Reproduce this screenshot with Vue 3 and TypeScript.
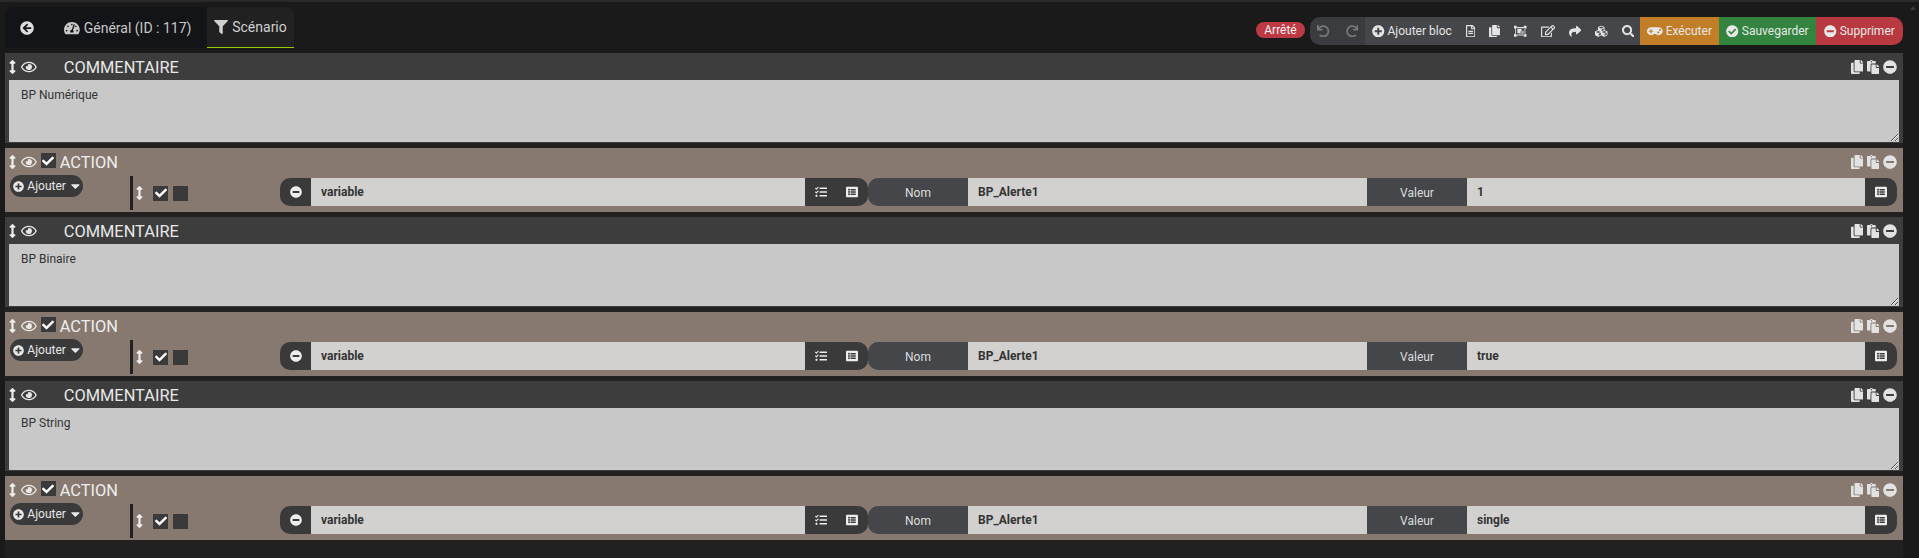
<template>
  <div class="page">
    <header class="topbar">
      <nav class="tabs">
        <a class="tab tab-back"><Icon name="back" /></a>
        <a class="tab tab-general"><Icon name="gauge" /> Général (ID : 117)</a>
        <a class="tab tab-active"><Icon name="filter" /> Scénario</a>
      </nav>
      <div class="actions">
        <span class="state">Arrêté</span>
        <div class="toolbar">
          <div class="history">
            <button class="tool muted"><Icon name="undo" /></button>
            <button class="tool muted"><Icon name="redo" /></button>
          </div>
          <div class="tools">
            <button class="tool add"><Icon name="plus" /> Ajouter bloc</button>
            <button v-for="t in tools" :key="t" class="tool"><Icon :name="t" /></button>
          </div>
          <button class="cmd run"><Icon name="gamepad" /> Exécuter</button>
          <button class="cmd save"><Icon name="checkCircle" /> Sauvegarder</button>
          <button class="cmd del"><Icon name="minus" /> Supprimer</button>
        </div>
      </div>
    </header>

    <main class="blocks">
      <template v-for="(b, i) in blocks" :key="i">
        <!-- bloc commentaire -->
        <section v-if="b.type === 'comment'" class="block comment">
          <div class="block-head">
            <Icon name="arrows" class="drag" />
            <Icon name="eye" class="eye" />
            <span class="comment-title">COMMENTAIRE</span>
            <span class="head-icons">
              <Icon name="copy" /><Icon name="paste" /><Icon name="minus" />
            </span>
          </div>
          <textarea class="comment-text" :value="b.text" spellcheck="false"></textarea>
        </section>

        <!-- bloc action -->
        <section v-else class="block action">
          <div class="block-head">
            <Icon name="arrows" class="drag" />
            <Icon name="eye" class="eye" />
            <span class="check on head-check"><Icon name="check" /></span>
            <span class="action-title">ACTION</span>
            <span class="head-icons">
              <Icon name="copy" /><Icon name="paste" /><Icon name="minus" />
            </span>
          </div>
          <div class="action-body">
            <div class="add-col">
              <button class="add-btn"><Icon name="plus" class="add-plus" /> Ajouter <Icon name="caret" class="caret" /></button>
            </div>
            <div class="sub">
              <div class="sub-left">
                <Icon name="arrows" class="drag" />
                <span class="check on"><Icon name="check" /></span>
                <span class="check"></span>
              </div>
              <div class="pill">
                <span class="seg seg-start"><Icon name="minus" /></span>
                <input class="field" value="variable" readonly />
                <span class="seg seg-double"><Icon name="tasks" /><Icon name="list" /></span>
                <span class="label label-start">Nom</span>
                <input class="field" :value="b.name" readonly />
                <span class="label">Valeur</span>
                <input class="field" :value="b.value" readonly />
                <span class="seg seg-end"><Icon name="list" /></span>
              </div>
            </div>
          </div>
        </section>
      </template>
    </main>
    <span class="scroll-arrow"></span>
  </div>
</template>

<script setup lang="ts">
import { h } from 'vue'

type Block =
  | { type: 'comment'; text: string }
  | { type: 'action'; name: string; value: string }

const blocks: Block[] = [
  { type: 'comment', text: 'BP Numérique' },
  { type: 'action', name: 'BP_Alerte1', value: '1' },
  { type: 'comment', text: 'BP Binaire' },
  { type: 'action', name: 'BP_Alerte1', value: 'true' },
  { type: 'comment', text: 'BP String' },
  { type: 'action', name: 'BP_Alerte1', value: 'single' }
]

const tools = ['file', 'copy', 'group', 'edit', 'share', 'cubes', 'search']

const ICONS: Record<string, [number, string]> = {
  back: [512, 'M256 504C119 504 8 393 8 256S119 8 256 8s248 111 248 248-111 248-248 248zm28.9-143.6L209.4 288H392c13.3 0 24-10.7 24-24v-16c0-13.3-10.7-24-24-24H209.4l75.5-72.4c9.7-9.3 9.9-24.8.4-34.3l-11-10.9c-9.4-9.4-24.6-9.4-33.9 0L107.7 239c-9.4 9.4-9.4 24.6 0 33.9l132.7 132.7c9.4 9.4 24.6 9.4 33.9 0l11-10.9c9.5-9.5 9.3-25-.4-34.3z'],
  gauge: [576, 'M288 32C128.94 32 0 160.94 0 320c0 52.8 14.25 102.26 39.06 144.8 5.61 9.62 16.3 15.2 27.44 15.2h443c11.14 0 21.83-5.58 27.44-15.2C561.75 422.26 576 372.8 576 320c0-159.06-128.94-288-288-288zm0 64c14.71 0 26.58 10.13 30.32 23.65-1.11 2.26-2.64 4.23-3.45 6.67l-9.22 27.67c-5.13 3.49-10.97 6.01-17.64 6.01-17.67 0-32-14.33-32-32S270.33 96 288 96zM96 384c-17.67 0-32-14.33-32-32s14.33-32 32-32 32 14.33 32 32-14.33 32-32 32zm48-160c-17.67 0-32-14.33-32-32s14.33-32 32-32 32 14.33 32 32-14.33 32-32 32zm246.77-72.41l-61.33 184C343.13 347.33 352 364.54 352 384c0 11.72-3.38 22.55-8.88 32H232.88c-5.5-9.45-8.88-20.28-8.88-32 0-33.94 26.5-61.43 59.9-63.59l61.34-184.01c4.17-12.56 17.73-19.45 30.36-15.17 12.57 4.19 19.35 17.79 15.17 30.36zm14.66 57.2l15.52-46.55c3.47-1.29 7.13-2.23 11.05-2.23 17.67 0 32 14.33 32 32s-14.33 32-32 32c-11.38-.01-20.89-6.28-26.57-15.22zM480 384c-17.67 0-32-14.33-32-32s14.33-32 32-32 32 14.33 32 32-14.33 32-32 32z'],
  filter: [512, 'M487.976 0H24.028C2.71 0-8.047 25.866 7.058 40.971L192 225.941V432c0 7.831 3.821 15.17 10.237 19.662l80 55.98C298.02 518.69 320 507.493 320 487.98V225.941l184.947-184.97C520.021 25.896 509.338 0 487.976 0z'],
  undo: [512, 'M212.333 224.333H12c-6.627 0-12-5.373-12-12V12C0 5.373 5.373 0 12 0h48c6.627 0 12 5.373 12 12v78.112C117.773 39.279 184.26 7.47 258.175 8.007c136.906.994 246.448 111.623 246.157 248.532C504.041 393.258 393.12 504 256.333 504c-64.089 0-122.496-24.313-166.51-64.215-5.099-4.622-5.334-12.554-.467-17.42l33.967-33.967c4.474-4.474 11.662-4.717 16.401-.525C170.76 415.336 211.58 432 256.333 432c97.268 0 176-78.716 176-176 0-97.267-78.716-176-176-176-58.496 0-110.28 28.476-142.274 72.333h98.274c6.627 0 12 5.373 12 12v48c0 6.627-5.373 12-12 12z'],
  redo: [512, 'M500.33 0h-47.41a12 12 0 0 0-12 12.57l4 82.76A247.42 247.42 0 0 0 256 8C119.34 8 7.9 119.53 8 256.19 8.1 393.07 119.1 504 256 504a247.1 247.1 0 0 0 166.18-63.91 12 12 0 0 0 .48-17.43l-34-34a12 12 0 0 0-16.38-.55A176 176 0 1 1 402.1 157.8l-101.53-4.87a12 12 0 0 0-12.57 12v47.41a12 12 0 0 0 12 12h200.33a12 12 0 0 0 12-12V12a12 12 0 0 0-12-12z'],
  plus: [512, 'M256 8C119 8 8 119 8 256s111 248 248 248 248-111 248-248S393 8 256 8zm144 276c0 6.6-5.4 12-12 12h-92v92c0 6.6-5.4 12-12 12h-56c-6.6 0-12-5.4-12-12v-92h-92c-6.6 0-12-5.4-12-12v-56c0-6.6 5.4-12 12-12h92v-92c0-6.6 5.4-12 12-12h56c6.6 0 12 5.4 12 12v92h92c6.6 0 12 5.4 12 12v56z'],
  minus: [512, 'M256 8C119 8 8 119 8 256s111 248 248 248 248-111 248-248S393 8 256 8zM124 296c-6.6 0-12-5.4-12-12v-56c0-6.6 5.4-12 12-12h264c6.6 0 12 5.4 12 12v56c0 6.6-5.4 12-12 12H124z'],
  checkCircle: [512, 'M504 256c0 136.967-111.033 248-248 248S8 392.967 8 256 119.033 8 256 8s248 111.033 248 248zM227.314 387.314l184-184c6.248-6.248 6.248-16.379 0-22.627l-22.627-22.627c-6.248-6.249-16.379-6.249-22.628 0L216 308.118l-70.059-70.059c-6.248-6.248-16.379-6.248-22.628 0l-22.627 22.627c-6.248 6.248-6.248 16.379 0 22.627l104 104c6.249 6.249 16.379 6.249 22.628.001z'],
  search: [512, 'M505 442.7L405.3 343c-4.5-4.5-10.6-7-17-7H372c27.6-35.3 44-79.7 44-128C416 93.1 322.9 0 208 0S0 93.1 0 208s93.1 208 208 208c48.3 0 92.7-16.4 128-44v16.3c0 6.4 2.5 12.5 7 17l99.7 99.7c9.4 9.4 24.6 9.4 33.9 0l28.3-28.3c9.4-9.4 9.4-24.6.1-34zM208 336c-70.7 0-128-57.2-128-128 0-70.7 57.2-128 128-128 70.7 0 128 57.2 128 128 0 70.7-57.2 128-128 128z'],
  share: [512, 'M503.691 189.836L327.687 37.851C312.281 24.546 288 35.347 288 56.015v80.053C127.371 137.907 0 170.1 0 322.326c0 61.441 39.581 122.309 83.333 154.132 13.653 9.931 33.111-2.533 28.077-18.631C66.066 312.814 132.917 274.316 288 272.085V360c0 20.7 24.3 31.453 39.687 18.164l176.004-152c11.071-9.562 11.086-26.753 0-36.328z'],
  copy: [448, 'M320 448v40c0 13.255-10.745 24-24 24H24c-13.255 0-24-10.745-24-24V120c0-13.255 10.745-24 24-24h72v296c0 30.879 25.121 56 56 56h168zm0-344V0H152c-13.255 0-24 10.745-24 24v368c0 13.255 10.745 24 24 24h272c13.255 0 24-10.745 24-24V128H344c-13.2 0-24-10.8-24-24zm120.971-31.029L375.029 7.029A24 24 0 0 0 358.059 0H352v96h96v-6.059a24 24 0 0 0-7.029-16.97z'],
  paste: [448, 'M128 184c0-30.879 25.122-56 56-56h136V56c0-13.255-10.745-24-24-24h-80.61C204.306 12.89 183.637 0 160 0s-44.306 12.89-55.39 32H24C10.745 32 0 42.745 0 56v336c0 13.255 10.745 24 24 24h104V184zm32-144c13.255 0 24 10.745 24 24s-10.745 24-24 24-24-10.745-24-24 10.745-24 24-24zm184 248h104v200c0 13.255-10.745 24-24 24H184c-13.255 0-24-10.745-24-24V184c0-13.255 10.745-24 24-24h136v104c0 13.2 10.8 24 24 24zm104-38.059V256h-96v-96h6.059a24 24 0 0 1 16.97 7.029l65.941 65.941a24.002 24.002 0 0 1 7.03 16.971z'],
  file: [384, 'M288 248v28c0 6.6-5.4 12-12 12H108c-6.6 0-12-5.4-12-12v-28c0-6.6 5.4-12 12-12h168c6.6 0 12 5.4 12 12zm-12 72H108c-6.6 0-12 5.4-12 12v28c0 6.6 5.4 12 12 12h168c6.6 0 12-5.4 12-12v-28c0-6.6-5.4-12-12-12zm108-188.1V464c0 26.5-21.5 48-48 48H48c-26.5 0-48-21.5-48-48V48C0 21.5 21.5 0 48 0h204.1C264.8 0 277 5.1 286 14.1L369.9 98c9 8.9 14.1 21.2 14.1 33.9zm-128-80V128h76.1L256 51.9zM336 464V176H232c-13.3 0-24-10.7-24-24V48H48v416h288z'],
  edit: [576, 'M402.3 344.9l32-32c5-5 13.7-1.5 13.7 5.7V464c0 26.5-21.5 48-48 48H48c-26.5 0-48-21.5-48-48V112c0-26.5 21.5-48 48-48h273.5c7.1 0 10.7 8.6 5.7 13.7l-32 32c-1.5 1.5-3.5 2.3-5.7 2.3H48v352h352V350.5c0-2.1.8-4.1 2.3-5.6zm156.6-201.8L296.3 405.7l-90.4 10c-26.2 2.9-48.5-19.2-45.6-45.6l10-90.4L432.9 17.1c22.9-22.9 59.9-22.9 82.7 0l43.2 43.2c22.9 22.9 22.9 60 .1 82.8zM460.1 174L402 115.9 216.2 301.8l-7.3 65.3 65.3-7.3L460.1 174zm64.8-79.7l-43.2-43.2c-4.1-4.1-10.8-4.1-14.8 0L436 82l58.1 58.1 30.9-30.9c4-4.2 4-10.8-.1-14.9z'],
  group: [512, 'M0 32h112v48h288V32h112v112h-48v224h48v112H400v-48H112v48H0V368h48V144H0V32zm112 96v-16H80v288h32v-16h288v16h32V112h-32v16H112zm24 32h176v112h-64v64H136V160zm208 80h48v104H224v-32h120v-72z']
  ,
  cubes: [512, 'M488.6 250.2L392 214V105.5c0-15-9.3-28.4-23.4-33.7l-100-37.5c-8.1-3.1-17.1-3.1-25.3 0l-100 37.5c-14.1 5.3-23.4 18.7-23.4 33.7V214l-96.6 36.2C9.3 255.5 0 268.9 0 283.9V394c0 13.6 7.7 26.1 19.9 32.2l100 50c10.1 5.1 22.1 5.1 32.2 0l103.9-52 103.9 52c10.1 5.1 22.1 5.1 32.2 0l100-50c12.2-6.1 19.9-18.6 19.9-32.2V283.9c0-15-9.3-28.4-23.4-33.7zM358 214.8l-85 31.9v-68.2l85-37v73.3zM154 104.1l102-38.2 102 38.2v.6l-102 41.4-102-41.4v-.6zm84 291.1l-85 42.5v-79.1l85-38.8v75.4zm0-112l-102 41.4-102-41.4v-.6l102-38.2 102 38.2v.6zm240 112l-85 42.5v-79.1l85-38.8v75.4zm0-112l-102 41.4-102-41.4v-.6l102-38.2 102 38.2v.6z'],
  gamepad: [640, 'M480.07 96H160a160 160 0 1 0 114.24 272h91.52A160 160 0 1 0 480.07 96zM248 268a12 12 0 0 1-12 12h-52v52a12 12 0 0 1-12 12h-24a12 12 0 0 1-12-12v-52H84a12 12 0 0 1-12-12v-24a12 12 0 0 1 12-12h52v-52a12 12 0 0 1 12-12h24a12 12 0 0 1 12 12v52h52a12 12 0 0 1 12 12zm216 76a40 40 0 1 1 40-40 40 40 0 0 1-40 40zm64-96a40 40 0 1 1 40-40 40 40 0 0 1-40 40z'],
  list: [512, 'M464 480H48c-26.51 0-48-21.49-48-48V80c0-26.51 21.49-48 48-48h416c26.51 0 48 21.49 48 48v352c0 26.51-21.49 48-48 48zM128 120c-22.091 0-40 17.909-40 40s17.909 40 40 40 40-17.909 40-40-17.909-40-40-40zm0 96c-22.091 0-40 17.909-40 40s17.909 40 40 40 40-17.909 40-40-17.909-40-40-40zm0 96c-22.091 0-40 17.909-40 40s17.909 40 40 40 40-17.909 40-40-17.909-40-40-40zm288-136v-32c0-6.627-5.373-12-12-12H204c-6.627 0-12 5.373-12 12v32c0 6.627 5.373 12 12 12h200c6.627 0 12-5.373 12-12zm0 96v-32c0-6.627-5.373-12-12-12H204c-6.627 0-12 5.373-12 12v32c0 6.627 5.373 12 12 12h200c6.627 0 12-5.373 12-12zm0 96v-32c0-6.627-5.373-12-12-12H204c-6.627 0-12 5.373-12 12v32c0 6.627 5.373 12 12 12h200c6.627 0 12-5.373 12-12z'],
  tasks: [512, 'M139.61 35.5a12 12 0 0 0-17 0L58.93 98.81l-22.7-22.12a12 12 0 0 0-17 0L3.53 92.41a12 12 0 0 0 0 17l47.59 47.4a12.78 12.78 0 0 0 17.61 0l15.59-15.62L156.52 69a12.09 12.09 0 0 0 .09-17zm0 159.19a12 12 0 0 0-17 0l-63.68 63.72-22.7-22.1a12 12 0 0 0-17 0L3.53 252a12 12 0 0 0 0 17L51 316.5a12.77 12.77 0 0 0 17.6 0l15.7-15.69 72.2-72.22a12 12 0 0 0 .09-16.9zM64 368c-26.49 0-48.59 21.5-48.59 48S37.53 464 64 464a48 48 0 0 0 0-96zm432 16H208a16 16 0 0 0-16 16v32a16 16 0 0 0 16 16h288a16 16 0 0 0 16-16v-32a16 16 0 0 0-16-16zm0-320H208a16 16 0 0 0-16 16v32a16 16 0 0 0 16 16h288a16 16 0 0 0 16-16V80a16 16 0 0 0-16-16zm0 160H208a16 16 0 0 0-16 16v32a16 16 0 0 0 16 16h288a16 16 0 0 0 16-16v-32a16 16 0 0 0-16-16z'],
  arrows: [256, 'M214.059 377.941H168V134.059h46.059c21.382 0 32.09-25.851 16.971-40.971L144.971 7.029c-9.373-9.373-24.568-9.373-33.941 0L24.971 93.088c-15.119 15.119-4.411 40.971 16.971 40.971H88v243.882H41.941c-21.382 0-32.09 25.851-16.971 40.971l86.059 86.059c9.373 9.373 24.568 9.373 33.941 0l86.059-86.059c15.12-15.119 4.412-40.971-16.97-40.971z'],
  eye: [576, 'M288 144a110.94 110.94 0 0 0-31.24 5 55.4 55.4 0 0 1 7.24 27 56 56 0 0 1-56 56 55.4 55.4 0 0 1-27-7.24A111.71 111.71 0 1 0 288 144zm284.52 97.4C518.29 135.59 410.93 64 288 64S57.68 135.64 3.48 241.41a32.35 32.35 0 0 0 0 29.19C57.71 376.41 165.07 448 288 448s230.32-71.64 284.52-177.41a32.35 32.35 0 0 0 0-29.19zM288 400c-98.65 0-189.09-55-237.93-144C98.91 167 189.34 112 288 112s189.09 55 237.93 144C477.1 345 386.66 400 288 400z'],
  check: [512, 'M173.898 439.404l-166.4-166.4c-9.997-9.997-9.997-26.206 0-36.204l36.203-36.204c9.997-9.998 26.207-9.998 36.204 0L192 312.69 432.095 72.596c9.997-9.997 26.207-9.997 36.204 0l36.203 36.204c9.997 9.997 9.997 26.206 0 36.204l-294.4 294.401c-9.998 9.997-26.207 9.997-36.204-.001z'],
  caret: [320, 'M31.3 192h257.3c17.8 0 26.7 21.5 14.1 34.1L174.1 354.8c-7.8 7.8-20.5 7.8-28.3 0L17.2 226.1C4.6 213.5 13.5 192 31.3 192z']
}

// petit composant local pour les icônes
const Icon = (props: { name: string }) => {
  const [w, d] = ICONS[props.name]
  return h('svg', {
    viewBox: `0 0 ${w} 512`,
    width: `${w / 512}em`,
    height: '1em',
    fill: 'currentColor',
    style: 'flex:none;vertical-align:-0.125em'
  }, [h('path', { d })])
}
Icon.props = ['name']
</script>

<style>
html,
body {
  margin: 0;
  background: #1a1a1a;
  overflow: hidden;
}
</style>

<style scoped>
.page {
  position: relative;
  height: 558px;
  display: flex;
  flex-direction: column;
  font-family: Roboto, "Liberation Sans", sans-serif;
  background: #1a1a1a;
  border-top: 2px solid #2a2a2a;
  box-sizing: border-box;
  overflow: hidden;
}

.scroll-arrow {
  position: absolute;
  top: 4px;
  right: 3px;
  border: 3px solid transparent;
  border-top: 0;
  border-bottom: 4px solid #3c3c3c;
}

/* barre du haut */
.topbar {
  height: 51px;
  flex: none;
  display: flex;
  justify-content: space-between;
  padding: 0 16px 0 5px;
}

.tabs {
  display: flex;
  height: 41px;
  margin-top: 5px;
  font-size: 14px;
  color: #c8c8c8;
  background: #121417;
  border-radius: 8px 8px 0 0;
}

.tab {
  display: flex;
  align-items: center;
  gap: 4px;
}

.tab-back {
  width: 59px;
  padding-left: 15px;
  box-sizing: border-box;
  font-size: 14px;
  color: #ddd;
}

.tab-general {
  width: 143px;
}

.tab-active {
  width: 87px;
  justify-content: center;
  background: #212121;
  border-radius: 0 8px 0 0;
  border-bottom: 1px solid #94ca02;
  box-sizing: content-box;
  height: 40px;
  color: #d0d0d0;
}

.actions {
  display: flex;
  align-items: flex-start;
  margin-top: 15px;
}

.state {
  margin: 5px 5px 0 0;
  width: 49px;
  height: 16px;
  line-height: 16px;
  text-align: center;
  border-radius: 8px;
  background: #bd3a44;
  color: #f2f2f2;
  font-size: 12px;
}

.toolbar {
  display: flex;
  height: 28px;
  border-radius: 10px;
  overflow: hidden;
  font-size: 12px;
}

button {
  font: inherit;
  border: none;
  color: inherit;
  background: none;
  padding: 0;
  white-space: nowrap;
}

.history {
  width: 55px;
  display: flex;
  align-items: center;
  justify-content: center;
  background: #3b3c3f;
}

.tools {
  width: 275px;
  box-sizing: border-box;
  display: flex;
  align-items: center;
  background: #44464a;
  color: #e4e4e4;
}

.tool {
  display: flex;
  align-items: center;
  gap: 3px;
  padding: 0 7px;
  font-size: 12.5px;
  color: #e4e4e4;
}

.tool.muted {
  padding: 0 8px;
  color: #77787b;
}

.tool.add {
  font-size: 12px;
  padding: 0 7px;
}

.tool.add svg {
  font-size: 12.5px;
}

.cmd {
  display: flex;
  align-items: center;
  justify-content: center;
  gap: 3px;
  color: #e8e8e8;
}

.cmd svg {
  font-size: 12.5px;
}

.run {
  width: 79px;
  background: #c27e27;
}

.save {
  width: 97px;
  background: #32843f;
}

.del {
  width: 87px;
  background: #b8393f;
}

/* blocs */
.blocks {
  flex: 1;
  margin: 0 16px 0 5px;
  background: #212121;
}

.block {
  margin-bottom: 5px;
  color: #eee;
}

.block-head {
  height: 27px;
  display: flex;
  align-items: center;
  padding: 0 6px 0 4px;
  font-size: 14px;
}

.drag {
  margin-right: 5px;
}

.eye {
  font-size: 14px;
  opacity: 0.95;
}

.comment {
  height: 90px;
  background: #3d3d3d;
}

.comment-title {
  margin-left: 27px;
  padding-top: 2px;
  font-size: 16.4px;
  color: #e8e8e8;
}

.comment-text {
  display: block;
  box-sizing: border-box;
  width: 1890px;
  height: 62px;
  margin-left: 4px;
  padding: 8px 12px;
  border: none;
  outline: none;
  border-radius: 0;
  background: #c8c8c8;
  color: #333;
  font: 12px Roboto, "Liberation Sans", sans-serif;
}

.head-icons {
  margin-left: auto;
  display: flex;
  align-items: center;
  gap: 4px;
  color: #e2e2e2;
}

.action {
  height: 64px;
  background: #887970;
}

.check {
  width: 15px;
  height: 15px;
  flex: none;
  display: flex;
  align-items: center;
  justify-content: center;
  background: #3a3a3a;
  color: #fff;
  font-size: 12px;
}

.head-check {
  margin: -2px 0 0 4px;
}

.action-title {
  margin-left: 4px;
  padding-top: 2px;
  font-size: 16.4px;
  color: #eee;
}

.action-body {
  display: flex;
  height: 37px;
}

.add-col {
  width: 125px;
  flex: none;
  padding-left: 5px;
  box-sizing: border-box;
}

.add-btn {
  display: flex;
  align-items: center;
  gap: 3px;
  height: 22px;
  width: 73px;
  justify-content: center;
  border-radius: 11px;
  background: #3a3a3a;
  color: #e8e8e8;
  font-size: 12px;
}

.add-plus {
  font-size: 11px;
}

.caret {
  margin-left: 2px;
  font-size: 14px;
}

.sub {
  flex: 1;
  display: flex;
  align-items: flex-start;
  padding-right: 6px;
  height: 34px;
  margin-top: 1px;
  border-left: 3px solid #212121;
}

.sub-left {
  width: 147px;
  height: 34px;
  flex: none;
  display: flex;
  align-items: center;
  gap: 5px;
  padding-left: 3px;
  box-sizing: border-box;
  font-size: 14px;
}

.sub-left .drag {
  margin-right: 5px;
}

.pill {
  flex: 1;
  height: 28px;
  margin-top: 2px;
  display: grid;
  grid-template-columns: 31px 494px 63px 100px 399px 100px 1fr 32px;
  font-size: 12px;
}

.seg {
  display: flex;
  align-items: center;
  justify-content: center;
  background: #3a3a3a;
  color: #eee;
}

.seg-start {
  border-radius: 10px 0 0 10px;
}

.seg-double {
  gap: 19px;
  border-radius: 0 10px 10px 0;
}

.seg-end {
  border-radius: 0 10px 10px 0;
}

.label {
  display: flex;
  align-items: center;
  justify-content: center;
  padding-top: 1px;
  background: #44464a;
  color: #ddd;
}

.label-start {
  border-radius: 10px 0 0 10px;
}

.field {
  min-width: 0;
  box-sizing: border-box;
  border: none;
  outline: none;
  padding: 0 0 1px 10px;
  background: #d2d1cf;
  color: #333;
  font: 700 12px Roboto, "Liberation Sans", sans-serif;
}
</style>
